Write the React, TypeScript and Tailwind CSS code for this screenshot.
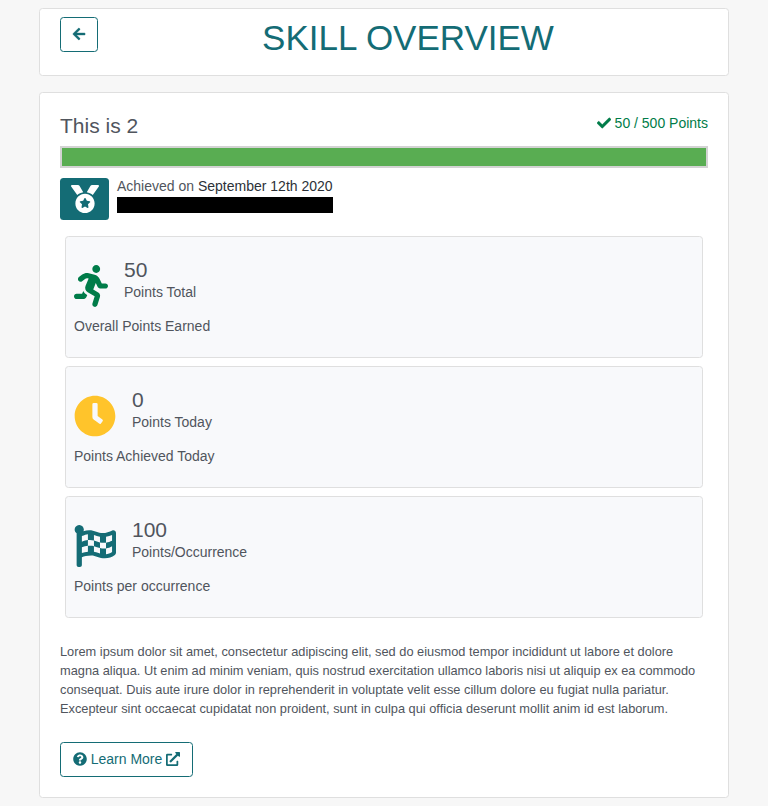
import React, { type ReactNode } from "react";
import { FaArrowLeft, FaCheck, FaMedal, FaRunning, FaClock, FaFlagCheckered, FaQuestionCircle, FaExternalLinkAlt } from "react-icons/fa";

interface StatCardProps {
  icon: ReactNode;
  value: string;
  label: string;
  description: string;
}

function StatCard({ icon, value, label, description }: StatCardProps) {
  return (
    <section className="h-[122px] rounded-[3.5px] border border-[#dfdfdf] bg-[#f8f9fb] px-2 pt-5">
      <div className="flex h-[59px] gap-4">
        <div className="pt-2">{icon}</div>
        <div>
          <div className="text-[21px] leading-[25px]">{value}</div>
          <div>{label}</div>
        </div>
      </div>
      <p>{description}</p>
    </section>
  );
}

export default function App() {
  return (
    <div className="h-[806px] bg-[#f7f7f7] px-[39px] pt-2 font-['Liberation_Sans',Arial,sans-serif] text-sm leading-[21px] text-[#50555d]">
      <header className="flex h-[68px] rounded-[3.5px] border border-[#dfdfdf] bg-white pl-5 pr-[18px] pt-2">
        <button aria-label="Back" className="flex h-[35px] w-[38px] justify-center rounded-[3.5px] border border-[#146c75] pt-[9px] text-[#146c75]"><FaArrowLeft size={14} className="stroke-[12px]" /></button>
        <h1 className="ml-2 flex-1 text-center text-[35px] leading-[42px] text-[#146c75]">SKILL OVERVIEW</h1>
      </header>
      <main className="mt-4 h-[706px] rounded-[3.5px] border border-[#dfdfdf] bg-white px-5 pt-5">
        <div className="flex h-[33px] justify-between">
          <h2 className="text-[21px] leading-[25px]">This is 2</h2>
          <div className="flex h-[21px] gap-1 text-[#007c49]"><FaCheck className="mt-[3px] stroke-[12px]" size={14} />50 / 500 Points</div>
        </div>
        <div className="h-[22px] border-2 border-[#d3d3d3] bg-[#59ad52]" />
        <div className="mt-2.5 flex h-[42px] gap-2">
          <div className="flex h-[42px] w-[49px] justify-center rounded-[3.5px] bg-[#146c75] pt-[7px] text-white"><FaMedal size={28} /></div>
          <div className="-mt-0.5">
            <div>Achieved on <span className="text-[#2c3138]">September 12th 2020</span></div>
            <div className="h-4 w-[216px] bg-black" />
          </div>
        </div>
        <div className="mx-[5px] mt-4 flex flex-col gap-2">
          <StatCard icon={<FaRunning className="h-[42px] w-[34px] text-[#007c49]" />} value="50" label="Points Total" description="Overall Points Earned" />
          <StatCard icon={<FaClock className="size-[42px] text-[#ffc42b]" />} value="0" label="Points Today" description="Points Achieved Today" />
          <StatCard icon={<FaFlagCheckered className="size-[42px] text-[#146c75]" />} value="100" label="Points/Occurrence" description="Points per occurrence" />
        </div>
        <p className="mt-6 text-[12.8px] leading-[19px]">
          Lorem ipsum dolor sit amet, consectetur adipiscing elit, sed do eiusmod tempor incididunt ut labore et dolore magna aliqua. Ut enim ad minim veniam, quis nostrud exercitation ullamco laboris nisi ut aliquip ex ea commodo consequat. Duis aute irure dolor in reprehenderit in voluptate velit esse cillum dolore eu fugiat nulla pariatur. Excepteur sint occaecat cupidatat non proident, sunt in culpa qui officia deserunt mollit anim id est laborum.
        </p>
        <button className="mt-6 flex h-[35px] w-[133px] justify-center gap-1 whitespace-nowrap rounded-[3.5px] border border-[#146c75] pt-1.5 text-[#146c75]">
          <FaQuestionCircle className="mt-[3px]" size={14} />Learn More<FaExternalLinkAlt className="mt-[3px]" size={14} />
        </button>
      </main>
    </div>
  );
}
